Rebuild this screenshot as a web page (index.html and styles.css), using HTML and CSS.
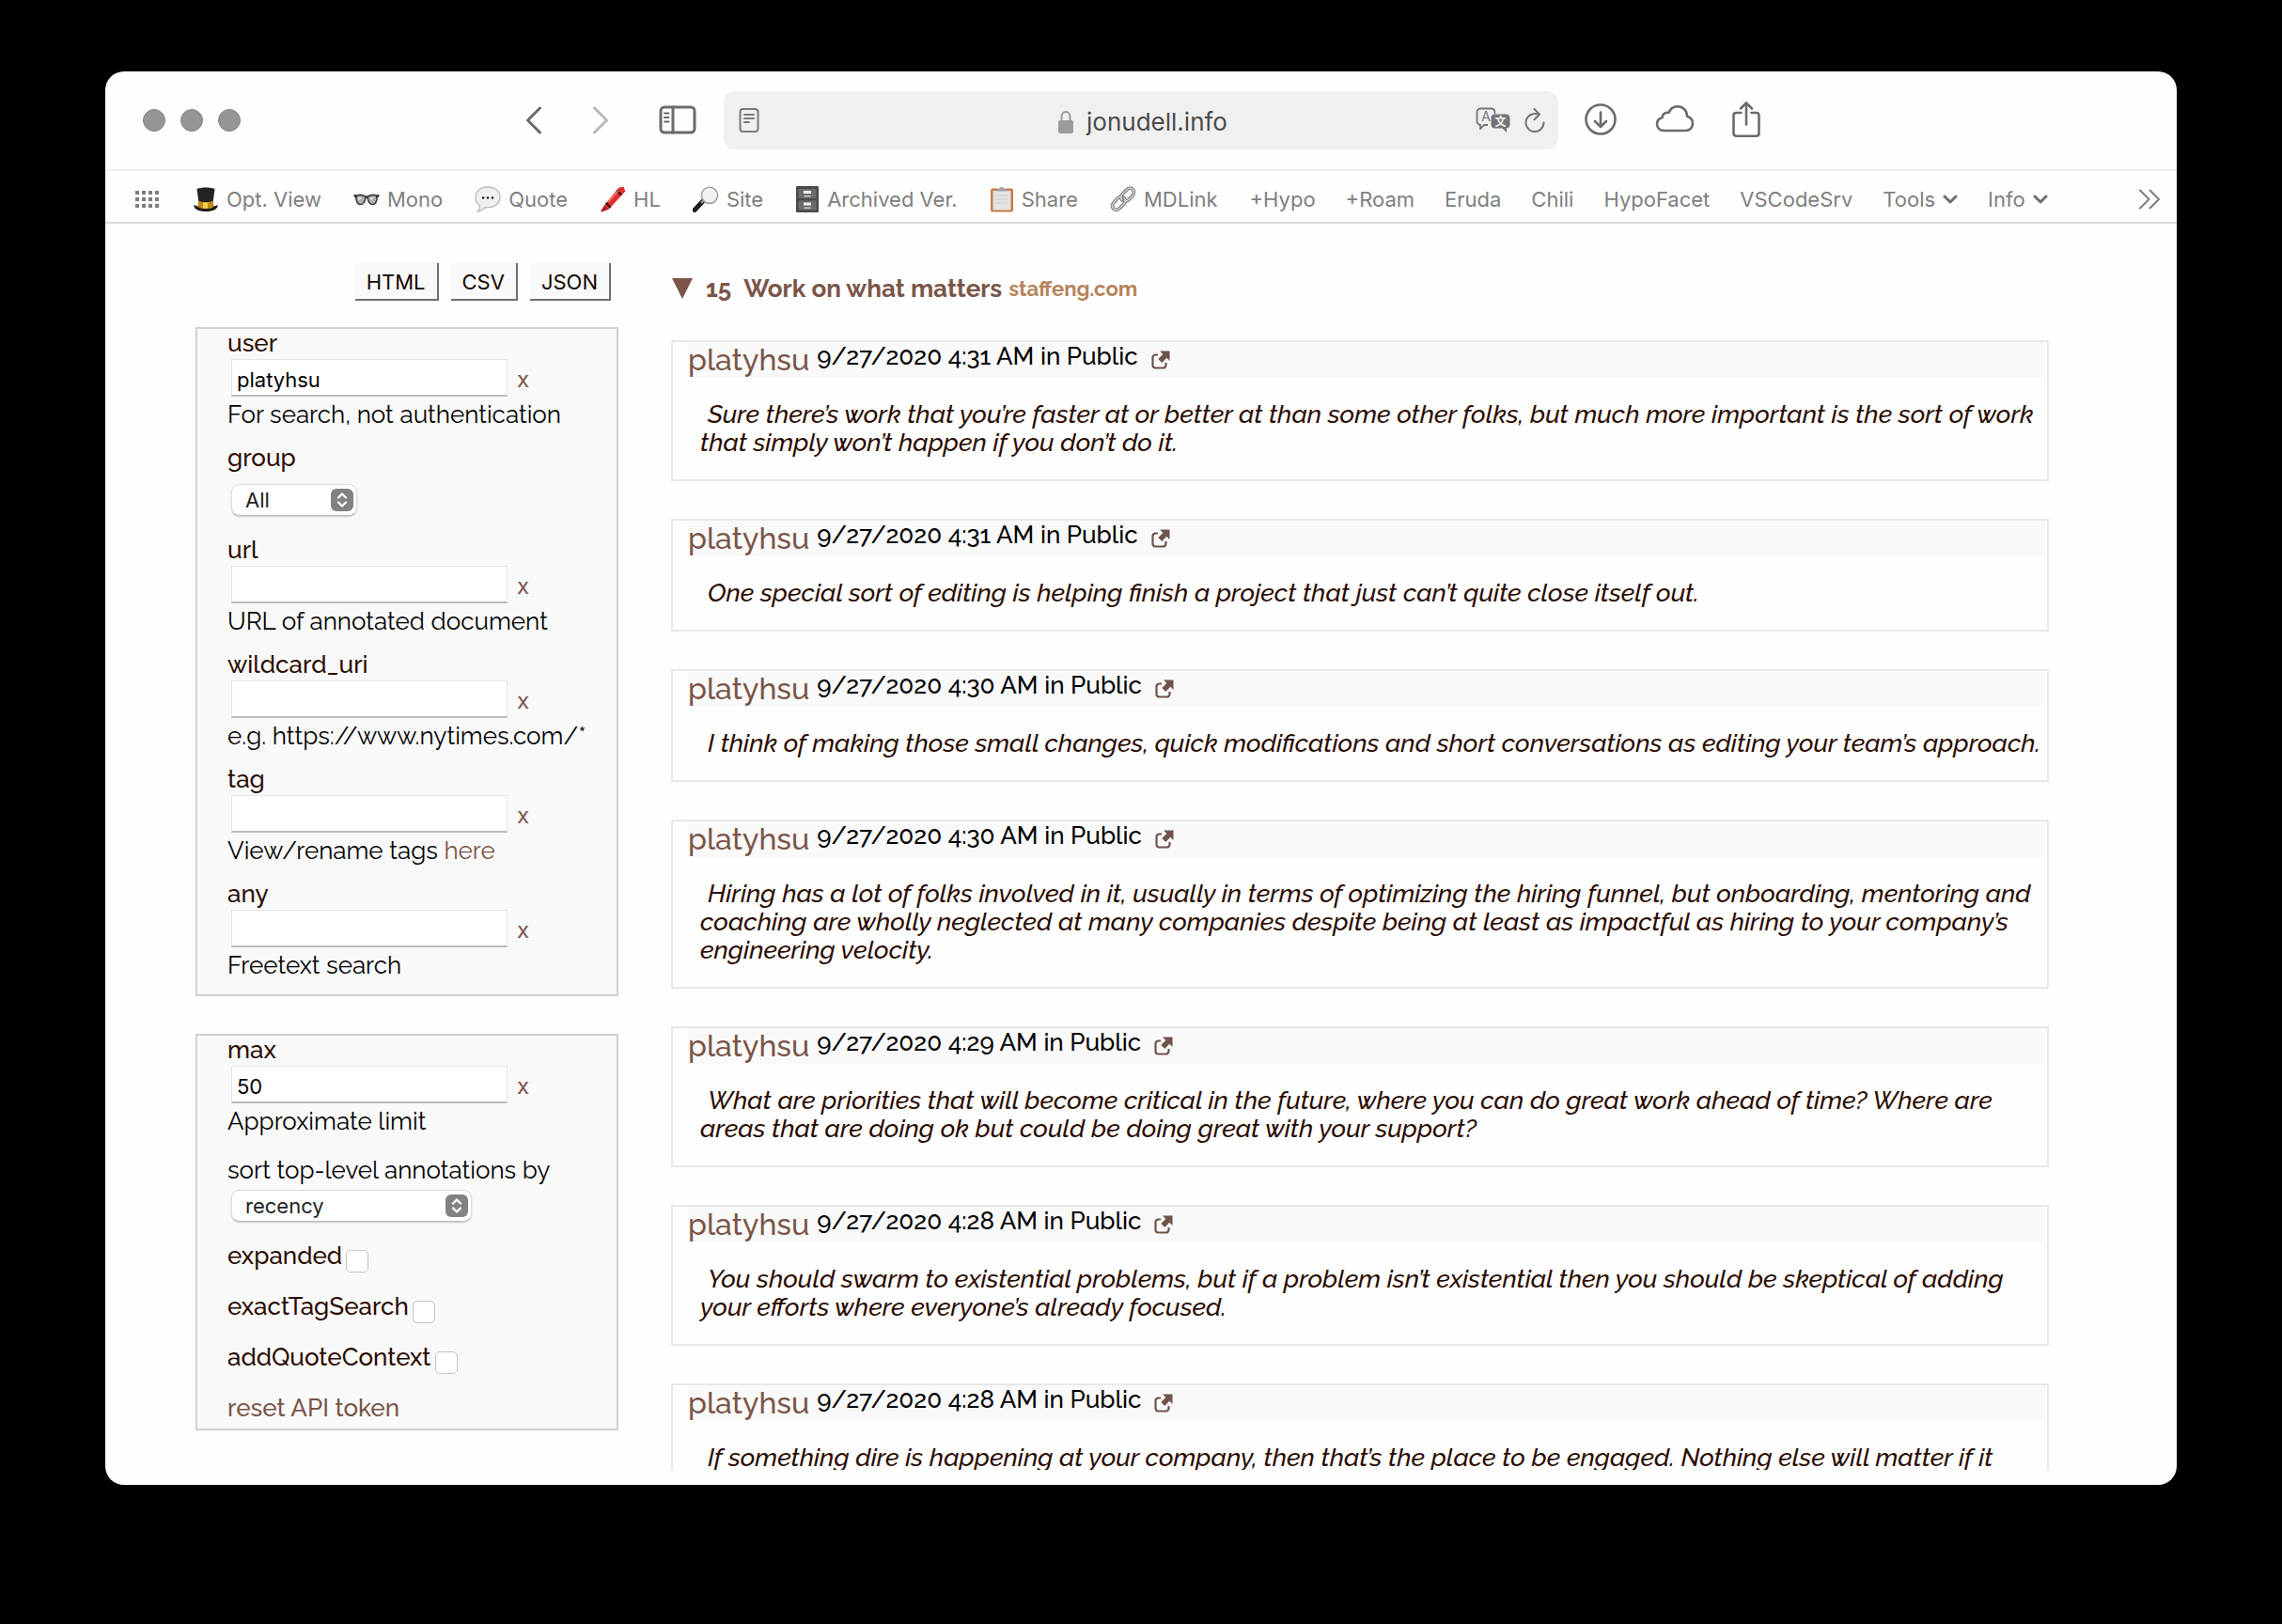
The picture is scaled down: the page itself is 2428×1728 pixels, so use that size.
FILE: index.html
```html
<!DOCTYPE html>
<html lang="en">
<head>
<meta charset="utf-8">
<title>jonudell.info</title>
<link rel="stylesheet" href="styles.css">
</head>
<body>
<div class="window">
  <header class="toolbar">
    <div class="toolbar-left">
      <div class="lights"><i class="light"></i><i class="light"></i><i class="light"></i></div>
      <div class="nav">
        <button class="icon-btn" type="button" aria-label="Back"><svg width="18" height="30" viewBox="0 0 18 30" fill="none" stroke="#6b6b6b" stroke-width="3" stroke-linecap="round" stroke-linejoin="round"><path d="M15.500 2 2.500 15l13 13"/></svg></button>
        <button class="icon-btn" type="button" aria-label="Forward"><svg width="18" height="30" viewBox="0 0 18 30" fill="none" stroke="#b9b9b9" stroke-width="3" stroke-linecap="round" stroke-linejoin="round"><path d="M2.500 2l13 13-13 13"/></svg></button>
        <button class="icon-btn" type="button" aria-label="Sidebar"><svg width="40" height="32" viewBox="0 0 40 32" fill="none" stroke="#6b6b6b" stroke-width="3" stroke-linecap="round"><rect x="2" y="2" width="36" height="27" rx="4"/><path d="M15 2v27"/><path stroke-width="2" d="M6 8.500h4.500M6 13h4.500M6 17.500h4.500"/></svg></button>
      </div>
    </div>
    <div class="address">
      <svg width="22" height="28" viewBox="0 0 22 28" fill="none" stroke="#7a7a7a" stroke-width="2" stroke-linecap="round"><rect x="1.500" y="2" width="19" height="24" rx="3"/><path d="M6 8h10M6 12h10M6 16h5"/></svg>
      <div class="site">
        <svg width="18" height="26" viewBox="0 0 18 26"><path d="M4.500 12V7.500a4.500 5.500 0 0 1 9 0V12" fill="none" stroke="#9b9b9b" stroke-width="2"/><rect x="1" y="11" width="16" height="14" rx="2" fill="#9b9b9b"/></svg>
        <span>jonudell.info</span>
      </div>
      <div class="address-tools">
        <button class="icon-btn" type="button" aria-label="Translate"><svg width="38" height="28" viewBox="0 0 38 28"><path d="M13 19H9l-4 4v-4.200C2.500 18.500 1.500 17 1.500 15V5.500c0-2.500 1.500-4 4-4h11c2.500 0 4 1.500 4 4V7" fill="none" stroke="#757575" stroke-width="1.800" stroke-linejoin="round"/><text x="11" y="15" font-size="14" text-anchor="middle" class="glyph" fill="#757575">A</text><path d="M20.500 7.500h12c2.500 0 4 1.500 4 4v7c0 2.300-1.200 3.700-3.500 4V27l-4.500-4.500h-8c-2.500 0-4-1.500-4-4v-7c0-2.500 1.500-4 4-4z" fill="#757575"/><text x="26.500" y="19.500" font-size="12" text-anchor="middle" class="glyph" font-weight="700" fill="#f0f0f0">文</text></svg></button>
        <button class="icon-btn" type="button" aria-label="Reload"><svg width="22" height="28" viewBox="0 0 22 28" fill="none" stroke="#757575" stroke-width="2" stroke-linecap="round" stroke-linejoin="round"><path d="M15.500 8.200A9.500 9.500 0 1 0 20.500 16.500M10.500 2l5.500 5.800-5.500 5.500"/></svg></button>
      </div>
    </div>
    <div class="toolbar-right">
      <button class="icon-btn" type="button" aria-label="Downloads"><svg width="36" height="36" viewBox="0 0 36 36" fill="none" stroke="#6b6b6b" stroke-width="2.600" stroke-linecap="round" stroke-linejoin="round"><circle cx="18" cy="17" r="15.500"/><path d="M18 9.500v15M12 19l6 6 6-6"/></svg></button>
      <button class="icon-btn" type="button" aria-label="iCloud"><svg width="42" height="34" viewBox="0 0 42 34" fill="none" stroke="#6b6b6b" stroke-width="2.600" stroke-linejoin="round"><path d="M9.500 28C5 28 2 25 2 21c0-3.500 2.200-6 5.500-6.800C7.500 10.500 11 8 14.500 9c1.700-4.300 5-6.800 9.300-6.800 6 0 10.200 4.500 10.200 10.600 3.700 1 6 4 6 7.500 0 4.500-3.300 7.700-7.500 7.700z"/></svg></button>
      <button class="icon-btn" type="button" aria-label="Share"><svg width="30" height="42" viewBox="0 0 30 42" fill="none" stroke="#6b6b6b" stroke-width="2.600" stroke-linecap="round" stroke-linejoin="round"><path d="M9.500 13H4.500c-1.700 0-3 1-3 2.700v19c0 1.800 1.300 3 3 3h21c1.700 0 3-1.200 3-3v-19c0-1.700-1.300-2.700-3-2.700h-5M15 25.500V2.500M9 8.500l6-6 6 6"/></svg></button>
    </div>
  </header>

  <nav class="bookmarks">
    <svg class="grid-icon" width="28" height="20" viewBox="0 0 28 20" fill="#7d7d7d"><path d="M1 1h4v4H1zM8 1h4v4H8zM15 1h4v4h-4zM22 1h4v4h-4zM1 8h4v4H1zM8 8h4v4H8zM15 8h4v4h-4zM22 8h4v4h-4zM1 15h4v4H1zM8 15h4v4H8zM15 15h4v4h-4zM22 15h4v4h-4z"/></svg>
    <a class="pic" href="#"><svg width="28" height="28" viewBox="0 0 28 28"><path d="M1 20c4 2.500 22 2.500 26 0-.500 4.500-5 7-13 7S1.500 24.500 1 20z" fill="#1d1a14"/><path d="M4.500 3c5-2 14-2 19 0l-1.800 14c-2 3-13.500 3-15.400 0z" fill="#25221f"/><path d="M6.200 15.500c4 2.200 11.600 2.200 15.600 0l.700 6.500c-4 3-13 3-17 0z" fill="#c08a14"/><path d="M11 17.500h5v6.300h-5z" fill="#f1cf58"/></svg>Opt. View</a>
    <a class="pic" href="#"><svg width="28" height="28" viewBox="0 0 28 28"><path d="M3 10.500c3-1.500 7-1.200 9.500.5h3c2.500-1.700 6.500-2 9.500-.5.500 5-1.200 9-4.500 9-3.200 0-4.800-3-5.300-7h-2.400c-.5 4-2.100 7-5.300 7-3.300 0-5-4-4.500-9z" fill="#a9b0b4" stroke="#3d3d3d" stroke-width="1.600"/><path d="M.5 9l3 .5v3L.8 11.500zM27.500 9l-3 .5v3l2.700-1z" fill="#222"/><path d="M5 12l4 0-3 3.500zM18 12h4l-3 3.500z" fill="#dfe4e6"/></svg>Mono</a>
    <a class="pic" href="#"><svg width="28" height="28" viewBox="0 0 28 28"><path d="M14 1C6.500 1 1 5.500 1 11.800c0 4 1.800 7 4.500 9C5.500 23 5 25 3.500 27c3-.500 5.500-2 7.500-4.300 9 1 16-3.700 16-10.900C27 5.500 21.500 1 14 1z" fill="#f0f0f1" stroke="#bcbcbe" stroke-width="1.400"/><circle cx="9" cy="12.500" r="1.300" fill="#222"/><circle cx="14" cy="12.500" r="1.300" fill="#222"/><circle cx="19" cy="12.500" r="1.300" fill="#222"/></svg>Quote</a>
    <a class="pic" href="#"><svg width="28" height="28" viewBox="0 0 28 28"><path d="M20.500 1.500l5-.8 1.800 4.800L10 24.500l-4.500-4.700z" fill="#e02f2f"/><path d="M5.500 19.800L1 26.800l1.500.7 7.500-3z" fill="#b51f22"/><path d="M18.800 3.600l5.200 5-1.600 1.800-5.200-5zM7.500 17l5 5-1.700 1.800-5-5z" fill="#4a1512"/><path d="M9 17L20 4.800" stroke="#f77" stroke-width="1.500"/></svg>HL</a>
    <a class="pic" href="#"><svg width="28" height="28" viewBox="0 0 28 28"><path d="M10.500 16.500l-8.500 9" stroke="#1c1c1c" stroke-width="5" stroke-linecap="round"/><path d="M9 18l4-4" stroke="#8b8b8b" stroke-width="2.500"/><circle cx="18" cy="9.800" r="8.600" fill="#f1f2f3" stroke="#a2a2a2" stroke-width="1.600"/></svg>Site</a>
    <a class="pic" href="#"><svg width="26" height="28" viewBox="0 0 26 28"><rect x="1" y="0" width="24" height="28" rx="1" fill="#4a4a4a"/><path d="M3.500 3h19v10h-19zM3.500 15.500h19v10h-19z" fill="#6b6b6b"/><path d="M9 5h8v3H9zM9 17.500h8v3H9z" fill="#f0f0f0"/><path d="M9.500 10h7v1.500h-7zM9.500 22.500h7V24h-7z" fill="#ccc"/></svg>Archived Ver.</a>
    <a class="pic" href="#"><svg width="26" height="28" viewBox="0 0 26 28"><rect x="1" y="2.500" width="24" height="25" rx="2" fill="#c77b48"/><path d="M3.500 5h19v20.500h-19z" fill="#e3e3e3"/><path d="M7.500 5.500V3h3.300a2.200 2.200 0 0 1 4.400 0h3.300v2.500z" fill="#9fa3a5"/><path d="M6 10h14M6 14h14M6 18h14" stroke="#d2d2d2"/></svg>Share</a>
    <a class="pic" href="#"><svg width="28" height="28" viewBox="0 0 28 28" fill="none" stroke-linecap="round"><g stroke="#777" stroke-width="3.600"><path d="M13 15c-2-2-1.500-4.500 0-6.200l5-5c4-4 10 1 6.500 5.600l-4.500 5c-1.500 1.500-3 1.700-4.500 1"/><path d="M15 12.500c2 2 1.500 4.500 0 6.200l-5 5c-4 4-10-1-6.500-5.600l4.500-5c1.500-1.500 3-1.700 4.500-1"/></g><g stroke="#d4d4d4" stroke-width="1.500"><path d="M13 15c-2-2-1.500-4.500 0-6.200l5-5c4-4 10 1 6.500 5.600l-4.500 5c-1.500 1.500-3 1.700-4.500 1"/><path d="M15 12.500c2 2 1.500 4.500 0 6.200l-5 5c-4 4-10-1-6.500-5.600l4.500-5c1.500-1.500 3-1.700 4.500-1"/></g></svg>MDLink</a>
    <a href="#">+Hypo</a>
    <a href="#">+Roam</a>
    <a href="#">Eruda</a>
    <a href="#">Chili</a>
    <a href="#">HypoFacet</a>
    <a href="#">VSCodeSrv</a>
    <a href="#">Tools<svg width="16" height="12" viewBox="0 0 16 12" fill="none" stroke="#6f6f6f" stroke-width="3" stroke-linecap="round" stroke-linejoin="round"><path d="M2 3l6 6 6-6"/></svg></a>
    <a href="#">Info<svg width="16" height="12" viewBox="0 0 16 12" fill="none" stroke="#6f6f6f" stroke-width="3" stroke-linecap="round" stroke-linejoin="round"><path d="M2 3l6 6 6-6"/></svg></a>
    <button class="icon-btn more" type="button" aria-label="More bookmarks"><svg width="26" height="22" viewBox="0 0 26 22" fill="none" stroke="#7d7d7d" stroke-width="2" stroke-linecap="round" stroke-linejoin="round"><path d="M3 1.500l9.500 9.500L3 20.500M13.500 1.500L23 11l-9.500 9.500"/></svg></button>
  </nav>

  <div class="page">
    <aside class="sidebar">
      <div class="exports">
        <button type="button">HTML</button>
        <button type="button">CSV</button>
        <button type="button">JSON</button>
      </div>
      <form class="panel">
        <div class="field"><label for="user">user</label><div class="entry"><input id="user" type="text" value="platyhsu"><a href="#">x</a></div><p>For search, not authentication</p></div>
        <div class="field choice"><label for="group">group</label><div class="select short"><select id="group"><option>All</option></select><svg width="24" height="24" viewBox="0 0 24 24"><rect width="24" height="24" rx="6" fill="#828282"/><path d="M8 9.500l4-4 4 4M8 14.500l4 4 4-4" fill="none" stroke="#fff" stroke-width="2.400" stroke-linecap="round" stroke-linejoin="round"/></svg></div></div>
        <div class="field"><label for="url">url</label><div class="entry"><input id="url" type="text"><a href="#">x</a></div><p>URL of annotated document</p></div>
        <div class="field"><label for="wildcard">wildcard_uri</label><div class="entry"><input id="wildcard" type="text"><a href="#">x</a></div><p>e.g. https://www.nytimes.com/*</p></div>
        <div class="field"><label for="tag">tag</label><div class="entry"><input id="tag" type="text"><a href="#">x</a></div><p>View/rename tags <a href="#">here</a></p></div>
        <div class="field"><label for="any">any</label><div class="entry"><input id="any" type="text"><a href="#">x</a></div><p>Freetext search</p></div>
      </form>
      <form class="panel">
        <div class="field"><label for="max">max</label><div class="entry"><input id="max" type="text" value="50"><a href="#">x</a></div><p>Approximate limit</p></div>
        <div class="field sort"><label for="sort">sort top-level annotations by</label><div class="select"><select id="sort"><option>recency</option></select><svg width="24" height="24" viewBox="0 0 24 24"><rect width="24" height="24" rx="6" fill="#828282"/><path d="M8 9.500l4-4 4 4M8 14.500l4 4 4-4" fill="none" stroke="#fff" stroke-width="2.400" stroke-linecap="round" stroke-linejoin="round"/></svg></div></div>
        <div class="check"><label for="expanded">expanded</label><input id="expanded" type="checkbox"></div>
        <div class="check"><label for="exact">exactTagSearch</label><input id="exact" type="checkbox"></div>
        <div class="check"><label for="context">addQuoteContext</label><input id="context" type="checkbox"></div>
        <a class="reset" href="#">reset API token</a>
      </form>
    </aside>

    <main class="results">
      <h1><svg width="24" height="24" viewBox="0 0 24 24"><path d="M1 1h22L12 23z" fill="#7a5548"/></svg><span class="count">15</span><span>Work on what matters</span><a href="#">staffeng.com</a></h1>

      <article class="card"><header><a class="author" href="#">platyhsu</a><span class="when">9/27/2020 4:31 AM in Public</span><a class="open" href="#" aria-label="Open annotation"><svg width="20" height="20" viewBox="0 0 20 20"><path d="M7 4.500H4.500A3 3 0 0 0 1.500 7.500v8a3 3 0 0 0 3 3h8a3 3 0 0 0 3-3V13" fill="none" stroke="#6e544b" stroke-width="2.200"/><path d="M9 .5h10.500V11l-3.300-3.200-4.900 5.200-4-4 5-5z" fill="#6e544b"/></svg></a></header>
      <blockquote>Sure there’s work that you’re faster at or better at than some other folks, but much more important is the sort of work that simply won’t happen if you don’t do it.</blockquote></article>

      <article class="card"><header><a class="author" href="#">platyhsu</a><span class="when">9/27/2020 4:31 AM in Public</span><a class="open" href="#" aria-label="Open annotation"><svg width="20" height="20" viewBox="0 0 20 20"><path d="M7 4.500H4.500A3 3 0 0 0 1.500 7.500v8a3 3 0 0 0 3 3h8a3 3 0 0 0 3-3V13" fill="none" stroke="#6e544b" stroke-width="2.200"/><path d="M9 .5h10.500V11l-3.300-3.200-4.900 5.200-4-4 5-5z" fill="#6e544b"/></svg></a></header>
      <blockquote>One special sort of editing is helping finish a project that just can’t quite close itself out.</blockquote></article>

      <article class="card"><header><a class="author" href="#">platyhsu</a><span class="when">9/27/2020 4:30 AM in Public</span><a class="open" href="#" aria-label="Open annotation"><svg width="20" height="20" viewBox="0 0 20 20"><path d="M7 4.500H4.500A3 3 0 0 0 1.500 7.500v8a3 3 0 0 0 3 3h8a3 3 0 0 0 3-3V13" fill="none" stroke="#6e544b" stroke-width="2.200"/><path d="M9 .5h10.500V11l-3.300-3.200-4.900 5.200-4-4 5-5z" fill="#6e544b"/></svg></a></header>
      <blockquote>I think of making those small changes, quick modifications and short conversations as editing your team’s approach.</blockquote></article>

      <article class="card"><header><a class="author" href="#">platyhsu</a><span class="when">9/27/2020 4:30 AM in Public</span><a class="open" href="#" aria-label="Open annotation"><svg width="20" height="20" viewBox="0 0 20 20"><path d="M7 4.500H4.500A3 3 0 0 0 1.500 7.500v8a3 3 0 0 0 3 3h8a3 3 0 0 0 3-3V13" fill="none" stroke="#6e544b" stroke-width="2.200"/><path d="M9 .5h10.500V11l-3.300-3.200-4.900 5.200-4-4 5-5z" fill="#6e544b"/></svg></a></header>
      <blockquote>Hiring has a lot of folks involved in it, usually in terms of optimizing the hiring funnel, but onboarding, mentoring and coaching are wholly neglected at many companies despite being at least as impactful as hiring to your company’s engineering velocity.</blockquote></article>

      <article class="card"><header><a class="author" href="#">platyhsu</a><span class="when">9/27/2020 4:29 AM in Public</span><a class="open" href="#" aria-label="Open annotation"><svg width="20" height="20" viewBox="0 0 20 20"><path d="M7 4.500H4.500A3 3 0 0 0 1.500 7.500v8a3 3 0 0 0 3 3h8a3 3 0 0 0 3-3V13" fill="none" stroke="#6e544b" stroke-width="2.200"/><path d="M9 .5h10.500V11l-3.300-3.200-4.900 5.200-4-4 5-5z" fill="#6e544b"/></svg></a></header>
      <blockquote>What are priorities that will become critical in the future, where you can do great work ahead of time? Where are areas that are doing ok but could be doing great with your support?</blockquote></article>

      <article class="card"><header><a class="author" href="#">platyhsu</a><span class="when">9/27/2020 4:28 AM in Public</span><a class="open" href="#" aria-label="Open annotation"><svg width="20" height="20" viewBox="0 0 20 20"><path d="M7 4.500H4.500A3 3 0 0 0 1.500 7.500v8a3 3 0 0 0 3 3h8a3 3 0 0 0 3-3V13" fill="none" stroke="#6e544b" stroke-width="2.200"/><path d="M9 .5h10.500V11l-3.300-3.200-4.900 5.200-4-4 5-5z" fill="#6e544b"/></svg></a></header>
      <blockquote>You should swarm to existential problems, but if a problem isn’t existential then you should be skeptical of adding your efforts where everyone’s already focused.</blockquote></article>

      <article class="card"><header><a class="author" href="#">platyhsu</a><span class="when">9/27/2020 4:28 AM in Public</span><a class="open" href="#" aria-label="Open annotation"><svg width="20" height="20" viewBox="0 0 20 20"><path d="M7 4.500H4.500A3 3 0 0 0 1.500 7.500v8a3 3 0 0 0 3 3h8a3 3 0 0 0 3-3V13" fill="none" stroke="#6e544b" stroke-width="2.200"/><path d="M9 .5h10.500V11l-3.300-3.200-4.900 5.200-4-4 5-5z" fill="#6e544b"/></svg></a></header>
      <blockquote>If something dire is happening at your company, then that’s the place to be engaged. Nothing else will matter if it</blockquote></article>
    </main>
  </div>
</div>
</body>
</html>
```
FILE: styles.css
```css
* { box-sizing: border-box; }

body {
  margin: 0;
  height: 100vh;
  padding: 76px 112px 148px;
  background: #000;
  color: #000;
  font: 400 26px/32px Raleway, Lato, sans-serif;
}

a { color: #7a5548; text-decoration: none; }
p, h1, blockquote { margin: 0; }
svg { display: block; flex: none; }

.window {
  display: flex;
  flex-direction: column;
  height: 100%;
  padding-bottom: 16px;
  border-radius: 20px;
  background: #fefefe;
  overflow: hidden;
}

/* Browser toolbar */
.toolbar {
  flex: none;
  display: grid;
  grid-template-columns: 1fr 888px 1fr;
  align-items: center;
  height: 104px;
  font-family: Inter, "Liberation Sans", sans-serif;
}
.toolbar-left, .nav, .toolbar-right, .lights, .address, .site, .address-tools {
  display: flex;
  align-items: center;
}
.toolbar-left { justify-content: space-between; padding: 0 29px 0 40px; }
.lights { gap: 16px; }
.light { width: 24px; height: 24px; border: 1px solid #858585; border-radius: 50%; background: #959595; }
.nav { gap: 53px; }
.icon-btn { padding: 0; border: 0; background: none; }
.address {
  justify-content: space-between;
  height: 62px;
  padding: 0 14px 0 16px;
  border-radius: 12px;
  background: #f0f0f0;
}
.site { gap: 13px; padding: 4px 0 0 53px; color: #4a4a4a; }
.address-tools { gap: 14px; }
.toolbar-right { gap: 40px; padding-left: 27px; }
.glyph { font-family: Inter, "Noto Sans CJK SC", sans-serif; }

/* Bookmarks bar */
.bookmarks {
  flex: none;
  display: flex;
  align-items: center;
  gap: 32px;
  height: 58px;
  padding: 6px 16px 0 31px;
  border-top: 2px solid #efefef;
  border-bottom: 2px solid #dcdcdc;
  font: 400 22px/28px Inter, "Liberation Sans", sans-serif;
  white-space: nowrap;
}
.bookmarks a { display: flex; align-items: center; gap: 8px; color: #7f7f7f; }
.bookmarks .pic, .grid-icon { margin-right: 2px; }
.more { margin-left: auto; }

/* Page */
.page {
  flex: 1;
  display: flex;
  gap: 56px;
  min-height: 0;
  padding: 42px 136px 0 96px;
  overflow: hidden;
}
.sidebar { flex: none; width: 450px; }
.exports { display: flex; justify-content: flex-end; gap: 13px; height: 40px; margin-bottom: 28px; padding-right: 8px; }
.exports button {
  padding: 2px 12px 0;
  border: 0 solid #6f6f6f;
  border-width: 0 2px 2px 0;
  background: #f9f9f9;
  color: #150500;
  font: 400 22px/28px Inter, "Liberation Sans", sans-serif;
}

.panel {
  margin-bottom: 40px;
  padding-left: 32px;
  border: 2px solid #d0d0d0;
  background: #f9f9f9;
}
.field { padding-bottom: 15px; }
.field label { display: block; padding-bottom: 2px; color: #2b0c00; font-weight: 500; line-height: 30px; }
.entry { display: flex; align-items: center; gap: 10px; margin: 0 0 3px 4px; }
.entry input {
  width: 294px;
  height: 40px;
  padding: 4px 5px 0;
  border: 1px solid #e6e6e6;
  border-bottom: 2px solid #bdbdbd;
  background: #fff;
  font: 400 22px/28px Inter, "Liberation Sans", sans-serif;
}
.entry a { padding-top: 3px; font: 400 24px/32px Inter, sans-serif; }
.choice { padding-bottom: 21px; }
.select { position: relative; width: 256px; margin: 4px 0 0 4px; }
.select.short { width: 134px; margin-top: 11px; }
.select select {
  display: block;
  width: 100%;
  height: 34px;
  padding: 0 14px;
  appearance: none;
  border: 1px solid #dedede;
  border-bottom-color: #b8b8b8;
  border-radius: 9px;
  background: #fff;
  box-shadow: 0 1px 2px #0003;
  color: #222;
  font: 400 22px/28px Inter, "Liberation Sans", sans-serif;
}
.select svg { position: absolute; top: 5px; right: 4px; pointer-events: none; }
.sort { padding: 6px 0 20px; }
.sort label { color: #000; font-weight: 400; }
.check { display: flex; align-items: flex-start; gap: 4px; height: 54px; color: #2b0c00; font-weight: 500; }
.check input {
  width: 24px;
  height: 24px;
  margin: 10px 0 0;
  appearance: none;
  border: 1px solid #c4c4c4;
  border-radius: 5px;
  background: #fff;
}
.reset { display: block; padding-bottom: 6px; font-weight: 500; }

.results { flex: 1; min-width: 0; padding-top: 11px; }
h1 { display: flex; align-items: center; margin-bottom: 39px; color: #7a5548; font-size: 26px; line-height: 32px; }
h1 svg { margin-right: 13px; }
h1 .count { margin-right: 13px; }
h1 a { margin-left: 7px; color: #b5835a; font-size: 22px; }

.card { margin-bottom: 40px; border: 2px solid #e8e8e8; }
.card header {
  display: flex;
  align-items: flex-start;
  height: 38px;
  margin: 0 2px 0 16px;
  background: #f9f9f9;
}
.author { font-size: 32px; font-weight: 500; line-height: 38px; }
.when { margin: 0 14px 0 8px; font-weight: 500; line-height: 30px; }
.open { padding-top: 9px; }
.card blockquote {
  padding: 24px 4px 24px 29px;
  color: #2b0c00;
  font-size: 27px;
  font-style: italic;
  font-weight: 500;
  line-height: 30px;
  text-indent: 8px;
}
```
